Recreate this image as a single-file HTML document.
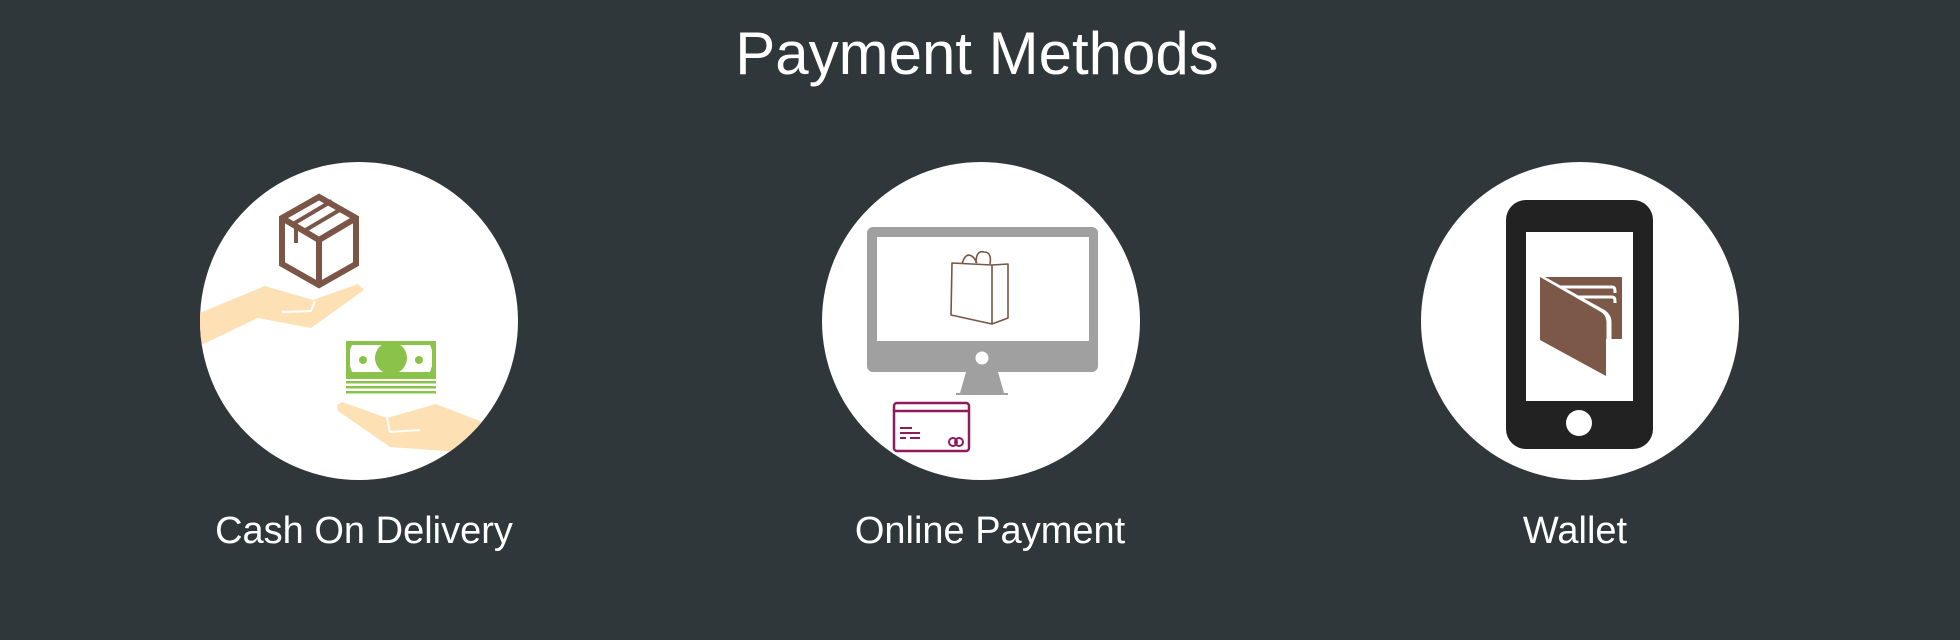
<!DOCTYPE html>
<html><head><meta charset="utf-8"><style>
html,body{margin:0;padding:0;background:#30373b;}
body{width:1960px;height:640px;overflow:hidden;position:relative;font-family:"Liberation Sans",sans-serif;color:#fff;}
.t{position:absolute;width:600px;text-align:center;white-space:nowrap;}
</style></head><body>
<svg width="1960" height="640" style="position:absolute;left:0;top:0">
<defs>
<clipPath id="c1"><circle cx="359" cy="321" r="159"/></clipPath>
</defs>
<circle cx="359" cy="321" r="159" fill="#fff"/>
<circle cx="981" cy="321" r="159" fill="#fff"/>
<circle cx="1580" cy="321" r="159" fill="#fff"/>
<!-- cash -->
<g clip-path="url(#c1)">
<path d="M195,315 L265,286 L313,300 L358,284 L364,290 L311,328 L258,318 L195,348 Z" fill="#fde0b4"/>
<path d="M315,301 L311,311 L282,312" stroke="#fff" stroke-width="2" fill="none"/>
<path d="M337,405 L342,402 L387,418 L436,404 L490,425 L460,452 L390,447 L338,411 Z" fill="#fde0b4"/>
<path d="M387,418 L390,432 L420,430" stroke="#fff" stroke-width="2" fill="none"/>
</g>
<g stroke="#7b5646" stroke-width="6" fill="none" stroke-linejoin="miter">
<path d="M319,197 L282,218 L282,264 L319,285 L356,264 L356,218 Z"/>
<path d="M282,218 L319,240 L356,218 M319,240 L319,285"/>
</g>
<g stroke="#7b5646" stroke-width="4" fill="none">
<path d="M293,224 L332,201 M304,231 L343,208 M296,226 V243"/>
</g>
<rect x="346" y="341" width="90" height="38" fill="#8bc34a"/>
<path d="M352,345 H430 L432,350 V366 L430,372 H352 L350,366 V350 Z" fill="#fff"/>
<circle cx="391" cy="358" r="16" fill="#8bc34a"/>
<circle cx="363" cy="360" r="4" fill="#8bc34a"/>
<circle cx="419" cy="360" r="4" fill="#8bc34a"/>
<rect x="346" y="381" width="90" height="2.5" fill="#8bc34a"/>
<rect x="346" y="386" width="90" height="2.5" fill="#8bc34a"/>
<rect x="346" y="391" width="90" height="2.5" fill="#8bc34a"/>
<!-- online -->
<rect x="867" y="227" width="231" height="145" rx="6" fill="#a0a0a0"/>
<rect x="877" y="237" width="212" height="104" fill="#fff"/>
<circle cx="982" cy="358" r="6.5" fill="#fff"/>
<path d="M966,372 H998 L1004,393 H960 Z" fill="#a0a0a0"/>
<rect x="956" y="393" width="52" height="2" fill="#a0a0a0"/>
<g stroke="#7a5444" stroke-width="1.6" fill="none" stroke-linejoin="round">
<path d="M952,263 L992,265 L992,324 L951,315 Z"/>
<path d="M992,265 L1008,264 L1008,318 L992,324"/>
<path d="M962,264 Q966,250 974,258 L977,263 M976,263 Q976,250 984,252 Q992,252 990,264"/>
</g>
<g stroke="#8e1b5b" stroke-width="2.5" fill="none">
<rect x="894" y="403" width="75" height="48" rx="3"/>
<path d="M894,411 H969"/>
<path d="M900,428 H912 M900,433 H920 M900,438 H906 M910,438 H920" stroke-width="2"/>
<circle cx="953" cy="442" r="4" stroke-width="2"/>
<circle cx="959" cy="442" r="4" stroke-width="2"/>
</g>
<!-- wallet -->
<rect x="1506" y="200" width="147" height="249" rx="20" fill="#222"/>
<rect x="1526" y="232" width="107" height="169" fill="#fff"/>
<circle cx="1579" cy="423" r="13" fill="#fff"/>
<rect x="1545" y="277" width="77" height="62" rx="1" fill="#7b5848"/>
<path d="M1558,287 H1612 Q1615,287 1615,291 V293 M1566,297 H1612 Q1615,297 1615,301 V303" stroke="#fff" stroke-width="3" fill="none"/>
<path d="M1540,277 L1603,312 Q1609,316 1609,322 V377" stroke="#fff" stroke-width="5" fill="none"/>
<path d="M1540,277 L1601,312 Q1606,315 1606,320 V376 L1540,340 Z" fill="#7b5848"/>
</svg>
<div class="t" style="top:19px;font-size:60px;left:677px;">Payment Methods</div>
<div class="t" style="top:510px;font-size:38px;left:64px;">Cash On Delivery</div>
<div class="t" style="top:510px;font-size:38px;left:690px;">Online Payment</div>
<div class="t" style="top:510px;font-size:38px;left:1275px;">Wallet</div>
</body></html>
